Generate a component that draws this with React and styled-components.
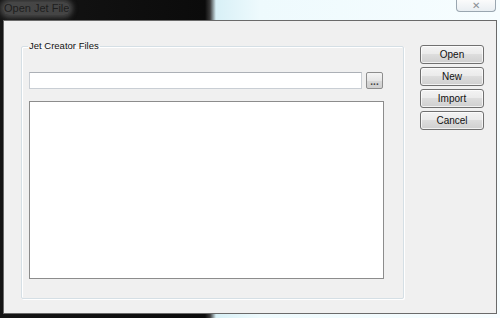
import React from 'react';
import styled, { createGlobalStyle } from 'styled-components';

const Global = createGlobalStyle`
  html, body { margin: 0; padding: 0; }
  body {
    width: 500px;
    height: 318px;
    overflow: hidden;
    font-family: "Liberation Sans", Arial, sans-serif;
  }
`;

const Frame = styled.div`
  width: 500px;
  height: 318px;
  display: flex;
  flex-direction: column;
  background: linear-gradient(to right, #151515 0, #0b0b0b 205px, #3a3a3a 210px, #d8f0f6 216px, #eefafd 260px, #f7fdff 100%);
`;

const TitleBar = styled.div`
  height: 20px;
  display: flex;
  align-items: flex-start;
  padding: 0 4px 0 3px;
`;

const Title = styled.span`
  font-size: 11px;
  line-height: 13px;
  margin-top: 2px;
  color: #1e1e1e;
  background: rgba(120, 120, 120, 0.5);
  box-shadow: 0 0 5px 3px rgba(120, 120, 120, 0.5);
  border-radius: 6px;
  padding: 0 1px;
`;

const CloseBtn = styled.div`
  margin-left: auto;
  width: 40px;
  height: 12px;
  box-sizing: border-box;
  border: 1px solid #9aa6b0;
  border-top: none;
  border-radius: 0 0 4px 4px;
  background: linear-gradient(#fbfbfb, #e9eef2);
  display: flex;
  align-items: center;
  justify-content: center;
  color: #8a8f94;
  font-size: 10px;
  line-height: 10px;
`;

const Body = styled.div`
  flex: 1;
  display: flex;
  padding: 0 3px 4px 3px;
`;

const Client = styled.div`
  flex: 1;
  background: #f0f0f0;
  border: 1px solid #6a6a6a;
  display: flex;
  align-items: flex-start;
  padding: 19px 0 0 17px;
`;

const Group = styled.fieldset`
  margin: 0;
  width: 383px;
  height: 259px;
  box-sizing: border-box;
  border: 1px solid #d5dfe5;
  box-shadow: inset 1px 1px 0 #fff, 1px 1px 0 #fff;
  border-radius: 2px;
  padding: 20px 0 0 7px;
  display: flex;
  flex-direction: column;
`;

const Legend = styled.legend`
  font-size: 9.5px;
  line-height: 12px;
  color: #111;
  padding: 0 1px;
  margin-left: -1px;
`;

const PathRow = styled.div`
  display: flex;
  gap: 4px;
  height: 17px;
`;

const TextBox = styled.input`
  width: 333px;
  height: 17px;
  box-sizing: border-box;
  border: 1px solid #c9ced4;
  border-top-color: #acb0b6;
  background: #fff;
  padding: 0;
  margin: 0;
  outline: none;
`;

const Browse = styled.button`
  width: 17px;
  height: 17px;
  box-sizing: border-box;
  border: 1px solid #8d8d8d;
  border-radius: 2px;
  background: linear-gradient(#f4f4f4, #e6e6e6 50%, #d9d9d9 51%, #cfcfcf);
  padding: 3px 0 0;
  margin: 0;
  font-size: 10px;
  line-height: 10px;
  font-weight: bold;
  color: #444;
  font-family: "Liberation Sans", Arial, sans-serif;
`;

const ListBox = styled.div`
  margin-top: 12px;
  width: 355px;
  height: 178px;
  box-sizing: border-box;
  border: 1px solid #8c8c8c;
  background: #fff;
`;

const Buttons = styled.div`
  display: flex;
  flex-direction: column;
  gap: 3px;
  margin: 5px 0 0 16px;
`;

const Btn = styled.button`
  width: 64px;
  height: 19px;
  box-sizing: border-box;
  border: 1px solid #707070;
  border-radius: 3px;
  background: linear-gradient(#f3f3f3, #ebebeb 45%, #dddddd 50%, #cfcfcf);
  box-shadow: inset 0 0 0 1px rgba(255,255,255,0.7);
  font-family: "Liberation Sans", Arial, sans-serif;
  font-size: 10px;
  color: #111;
  padding: 0;
  margin: 0;
`;

export default function App() {
  return (
    <Frame>
      <Global />
      <TitleBar>
        <Title>Open Jet File</Title>
        <CloseBtn>✕</CloseBtn>
      </TitleBar>
      <Body>
        <Client>
          <Group>
            <Legend>Jet Creator Files</Legend>
            <PathRow>
              <TextBox readOnly />
              <Browse>...</Browse>
            </PathRow>
            <ListBox />
          </Group>
          <Buttons>
            {['Open', 'New', 'Import', 'Cancel'].map(label => (
              <Btn key={label}>{label}</Btn>
            ))}
          </Buttons>
        </Client>
      </Body>
    </Frame>
  );
}
